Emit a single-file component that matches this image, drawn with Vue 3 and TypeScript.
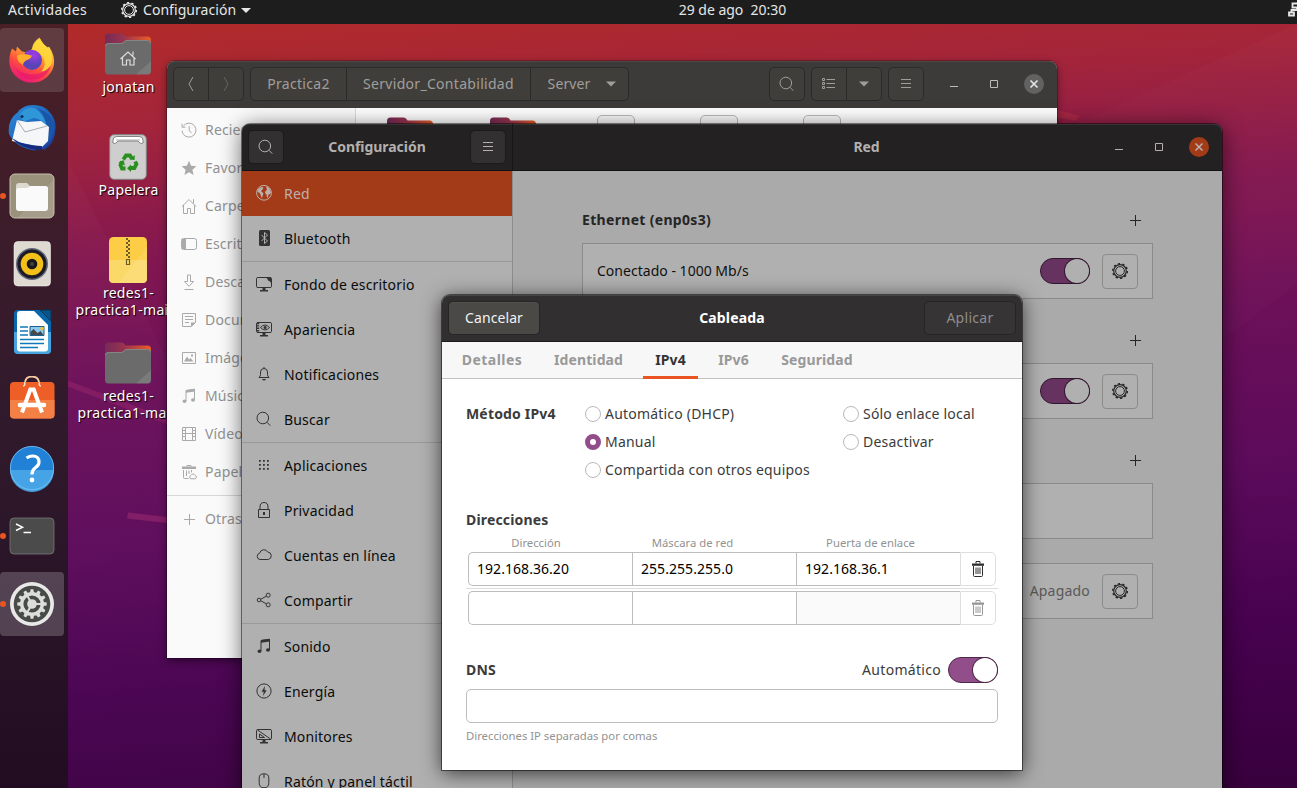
<script setup lang="ts">
import { ref } from 'vue'

interface Glyph { s?: string; f?: string }

const glyphs: Record<string, Glyph> = {
  recent: { s: 'M2.2 4.2A7 7 0 1 1 1 8.6M1 1.6v3.6h3.4M8.2 4.2v4.6l2.4 2' },
  star: { f: 'M8 .8l2.1 4.9 5.3.5-4 3.5 1.2 5.2L8 12.2l-4.600 2.700 1.200-5.200-4-3.500 5.300-.5z' },
  home: { s: 'M.8 8.700L8 1.500l7.200 7.200M2.500 7v8.500h4v-5h3v5h4V7M12.500 1.200v4.400' },
  desktop: { s: 'M2.500 2.500h11a2 2 0 0 1 2 2v7a2 2 0 0 1-2 2h-11a2 2 0 0 1-2-2v-7a2 2 0 0 1 2-2zM4.500 2.500v11', f: 'M1 3h3v10H1z' },
  download: { s: 'M6.500 1v6.500h-3L8 12.300l4.500-4.800h-3V1zM3.500 15.500h9' },
  document: { s: 'M1.500 1.500h13v9l-4 4h-9zM4 4.500h8M4 7.500h8M4 10.500h4', f: 'M10 14.500v-4h4.500z' },
  image: { s: 'M1.500 2.500h13v11h-13z', f: 'M3 11.500l3-5 2 3 1.500-1.500 3 3.500zM10 4.500h2v2h-2z' },
  music: { s: 'M5 13V2.500l8.500-1.200V12', f: 'M5 2l9-1.200v2.800L5 4.800zM1.500 13.200a2 1.800 0 1 0 4 0 2 1.800 0 1 0-4 0zM10 12a2 1.800 0 1 0 4 0 2 1.800 0 1 0-4 0z' },
  video: { s: 'M1.500 1.500h13v13h-13zM4.500 1.500v13M11.500 1.500v13M4.500 7.500h7M1.500 4.500h3M1.500 7.500h3M1.500 10.500h3M11.500 4.500h3M11.500 7.500h3M11.500 10.500h3' },
  trashfull: { s: 'M2.500 6v7.500q0 1 1 1h4M6 2.500v-1h4v1M5.500 6.500V12M8 6.500V10M10.500 6v2.500M9.500 14.800a2 2 0 0 1 .5-3.500 2.200 2.200 0 0 1 4 0 2 2 0 0 1 .5 3.500z', f: 'M1 2.500h14v2.500H1z' },
  plus: { s: 'M8.500 3v11M3 8.500h11' },
  search: { s: 'M1 7a5.800 5.800 0 1 0 11.600 0A5.800 5.800 0 1 0 1 7M11 11.300l3.300 3.400' },
  menu: { s: 'M3 3.500h10M3 7.500h10M3 11.500h10' },
  list: { s: 'M5.500 3.500H14M5.500 7.500H14M5.500 11.500H14M1.500 2.500H3.500v2H1.500zM1.500 6.500H3.500v2H1.500zM1.500 10.500H3.500v2H1.500z' },
  down: { f: 'M3 5.500h10L8 10.500z' },
  left: { s: 'M10 1L6 8l4 7' },
  right: { s: 'M6 1l4 7-4 7' },
  globe: { s: 'M.6 7.800a7.400 7.400 0 1 0 14.800 0A7.400 7.400 0 1 0 .6 7.800', f: 'M2 4.500l3-2.500 2.500.5-1 2L5 6l2.500 2.500L6.500 11 6 13.500 5 11 3.800 8 1.500 7zM10 1.500l3 1.300 2 4.700-1 1.500-1.500.5L12 12l-1 1L10.500 9.500 9 8l.5-2 1.500-1z' },
  bluetooth: {},
  wallpaper: { s: 'M2 1.500h12q1.500 0 1.500 1v8q0 1-1.500 1H2q-1.500 0-1.500-1v-8q0-1 1.500-1z', f: 'M9.500 1.500H15V7q-1-2.500-3-2.500Q12 2.500 9.500 1.500zM6.500 11.500h3V14H12v1.500H4V14h2.500z' },
  appearance: { s: 'M2 1.500h12q1.500 0 1.500 1v8q0 1-1.500 1H2q-1.500 0-1.500-1v-8q0-1 1.500-1zM4.500 6.500q4.500-5 9 0-4.500 5-9 0z', f: 'M7.500 6.500a1.600 1.600 0 1 0 3.200 0 1.600 1.600 0 1 0-3.200 0zM1 2h2.200v1.300H1zM1 4.300h2.200v1.300H1zM1 6.600h2.200v1.300H1zM1 8.900h2.200v1.600H1zM6.500 11.500h3V14H12v1.500H4V14h2.500z' },
  bell: { s: 'M3 11.500h10q-1.500-1.500-1.500-3V6q0-3.300-3.500-3.500Q4.500 2.700 4.500 6v2.500q0 1.500-1.500 3zM8 1v1.500', f: 'M6 13h4q-.5 1.500-2 1.500T6 13z' },
  apps: { f: 'M3 3h1.800v1.800H3zM7 3h1.800v1.800H7zM11 3h1.800v1.800H11zM3 7h1.800v1.800H3zM7 7h1.800v1.800H7zM11 7h1.800v1.800H11zM3 11h1.800v1.800H3zM7 11h1.800v1.800H7zM11 11h1.800v1.800H11z' },
  lock: { s: 'M2.500 7.500h11v8h-11zM4 7.500V5q0-4.500 4-4.500T12 5v2.500', f: 'M7 10h2v3H7z' },
  cloud: { s: 'M4 12.500a3.200 3.200 0 0 1-.3-6.300 4.300 4.300 0 0 1 8-1.200 3.800 3.800 0 0 1 .6 7.500z' },
  share: { s: 'M1.200 8a1.800 1.800 0 1 0 3.600 0 1.800 1.800 0 1 0-3.600 0M10.200 3.200a2 2 0 1 0 4 0 2 2 0 1 0-4 0M10.200 12.800a2 2 0 1 0 4 0 2 2 0 1 0-4 0M4.800 7.200l5.500-3M4.800 8.800l5.500 3' },
  energy: { s: 'M.9 8a7.100 7.100 0 1 0 14.200 0A7.100 7.100 0 1 0 .9 8', f: 'M9 3L5.500 8.800h2.200L7 13l3.700-5.800H8.500z' },
  monitor: { s: 'M2 1.500h12q1.500 0 1.500 1v8q0 1-1.500 1H2q-1.500 0-1.500-1v-8q0-1 1.500-1zM1.500 2l13 9M3.500 6V9.500h5z', f: 'M6.500 11.500h3V14H12v1.500H4V14h2.500z' },
  mouse: { s: 'M8 .8q4.800 0 4.800 4v5q0 5-4.800 5t-4.800-5v-5q0-4 4.800-4zM8 1v4' },
  trash: { s: 'M3.500 5v9.500q0 1 1 1h7q1 0 1-1V5M6 2.500v-2h4v2M6 6.500V13M8 6.500V13M10 6.500V13', f: 'M2 2.500h12v2.300H2z' },
}

const dock = [
  { id: 'firefox', on: true, dot: false }, { id: 'thunderbird', on: false, dot: false },
  { id: 'files', on: false, dot: true }, { id: 'rhythmbox', on: false, dot: false },
  { id: 'writer', on: false, dot: false }, { id: 'software', on: false, dot: false },
  { id: 'help', on: false, dot: false }, { id: 'terminal', on: false, dot: true },
  { id: 'settings', on: true, dot: true },
]

const places = [
  ['recent', 'Recientes'], ['star', 'Favoritos'], ['home', 'Carpeta personal'], ['desktop', 'Escritorio'],
  ['download', 'Descargas'], ['document', 'Documentos'], ['image', 'Imágenes'], ['music', 'Música'],
  ['video', 'Vídeos'], ['trashfull', 'Papelera'],
]

const panels = [
  [['globe', 'Red'], ['bluetooth', 'Bluetooth']],
  [['wallpaper', 'Fondo de escritorio'], ['appearance', 'Apariencia'], ['bell', 'Notificaciones'], ['search', 'Buscar']],
  [['apps', 'Aplicaciones'], ['lock', 'Privacidad'], ['cloud', 'Cuentas en línea'], ['share', 'Compartir']],
  [['music', 'Sonido'], ['energy', 'Energía'], ['monitor', 'Monitores'], ['mouse', 'Ratón y panel táctil']],
]

const tabs = ['Detalles', 'Identidad', 'IPv4', 'IPv6', 'Seguridad']
const tab = ref('IPv4')
const methods = ['Automático (DHCP)', 'Sólo enlace local', 'Manual', 'Desactivar', 'Compartida con otros equipos']
const method = ref('Manual')
const rows = [['192.168.36.20', '255.255.255.0', '192.168.36.1'], ['', '', '']]
const teeth = Array.from({ length: 12 }, (_, i) => i * 30)
</script>

<template>
  <div class="screen">
    <svg class="wallpaper" width="1297" height="788" viewBox="0 0 1297 788">
      <path d="M68 160L380 788H68z" fill="#fff" opacity=".018" />
      <path d="M45 372l122 46v6L45 378z" fill="#d04080" opacity=".22" />
      <path d="M128 512.500l60 7v6l-61-7z" fill="#d04080" opacity=".3" />
      <path d="M1050 108l30 8-4 5-26-5z" fill="#d33a48" opacity=".3" />
      <path d="M1075 124L1297 24v260L1222 340z" fill="#fff" opacity=".015" />
    </svg>

    <header class="topbar">
      <span class="act">Actividades</span>
      <span class="appmenu">
        <svg class="gear" viewBox="0 0 16 16"><use href="#cog" /></svg>
        <span>Configuración</span>
        <svg class="tri" viewBox="0 0 10 5"><path d="M0 0h10L5 5z" fill="currentColor" /></svg>
      </span>
      <span class="clock">29 de ago&nbsp; 20:30</span>
      <svg class="net" viewBox="0 0 9 16"><path d="M4.500 1.500h6v4h-6zM1 10.500h5v3H1zM3.500 10V8H9V5" fill="none" stroke="currentColor" stroke-width="1.800" /></svg>
    </header>

    <svg class="defs" width="0" height="0">
      <defs>
        <g id="cog" fill="none" stroke="currentColor">
          <circle cx="8" cy="8" r="4.400" stroke-width="1" />
          <circle cx="8" cy="8" r="6.300" stroke-width="1.200" />
          <circle cx="8" cy="8" r="7.300" stroke-width="1.500" stroke-dasharray="2.200 2.387" />
        </g>
        <linearGradient id="fold" x1="0" x2="1"><stop offset="0" stop-color="#752a57" /><stop offset=".4" stop-color="#983450" /><stop offset="1" stop-color="#ee5c25" /></linearGradient>
        <linearGradient id="ff" x1=".8" y1="0" x2=".3" y2="1"><stop offset="0" stop-color="#fff44f" /><stop offset=".35" stop-color="#ffa930" /><stop offset=".65" stop-color="#ff4f3f" /><stop offset="1" stop-color="#e6157a" /></linearGradient>
        <radialGradient id="ffp" cx=".6" cy=".25"><stop offset="0" stop-color="#a43be8" /><stop offset="1" stop-color="#5a45b8" /></radialGradient>
        <linearGradient id="tb" x1="0" y1="0" x2="1" y2="1"><stop offset="0" stop-color="#2f8fdc" /><stop offset=".6" stop-color="#1a5fb8" /><stop offset="1" stop-color="#20308c" /></linearGradient>
        <symbol id="folder" viewBox="0 0 46 42">
          <path d="M0 10V4q0-3.500 3.500-3.500h13q2 0 3 1.500l1 1.500h22q3.500 0 3.500 3.500v10H0z" fill="url(#fold)" />
          <path d="M0 13q0-3 3.500-3H17l4-3h21.500q3.500 0 3.500 3.500V38q0 3.500-3.500 3.500h-39Q0 41.500 0 38z" fill="#6b6b6b" />
          <path d="M46 28v10q0 3.500-3.500 3.500H31z" fill="#fff" opacity=".1" />
          <path d="M.5 13q0-2.500 3-2.500H17l4-3h21.500q3 0 3 3" fill="none" stroke="#8b8b8b" stroke-width=".8" />
        </symbol>
      </defs>
    </svg>

    <aside class="dock">
      <div v-for="d in dock" :key="d.id" class="dockitem" :class="{ on: d.on }">
        <i v-if="d.dot" class="dot"></i>
        <svg viewBox="0 0 48 48" width="48" height="48">
          <g v-if="d.id === 'firefox'" transform="translate(0 -2.500)">
            <path d="M4 15l4 3 1-5 5 5 5 1q6-3 7-8 2-4 6-6 3 6 8 9l1-1q6 9 5 18a22.500 21.500 0 0 1-44 2Q0 24 4 15z" fill="url(#ff)" />
            <path d="M24 16q0-7 7.500-12 2 6 8 11 6 6 4 15-2 7-10 8 6-8 1-15-4-6-10.500-7z" fill="#ffd93a" opacity=".85" />
            <path d="M3 24q2 15 20 17 13 0 20-9-4 14-19 14T3 24z" fill="#e8166f" opacity=".65" />
            <circle cx="24" cy="26.500" r="10" fill="url(#ffp)" />
            <path d="M9 22q6-3 15 0-1 3-5 4.500-4 2-4 5Q9 29 9 22z" fill="#ffae2b" />
            <path d="M17 19q6-4 11-1-4 1-5 4z" fill="#8a3be0" />
          </g>
          <g v-else-if="d.id === 'thunderbird'">
            <path d="M20 1.500q14-2 21 6 7 7 6.500 17Q47 40 36 46l-5-3-4 3.500Q8 44 1 30 -1 16 10 8q2-4 10-6.500z" fill="url(#tb)" />
            <path d="M29 4q10 8 10 21 0 11-6 19 10-4 13-17Q48 11 29 4z" fill="#1a55a8" />
            <path d="M12 10q7-9 16-5 8 5 11 18-5-8-13-9l-9 3q-5-1-5-7z" fill="#2f97d8" />
            <path d="M9 16l10 2 14-1 8 6-1 14-6 6L4 37z" fill="#f5f6f8" />
            <path d="M9 16l8 12 22-6" fill="none" stroke="#a9adb5" stroke-width="1" />
            <path d="M4 34q11 8 30 8l-1 4q-20-1-29-12z" fill="#172b7e" />
            <circle cx="14" cy="12.500" r="1.500" fill="#14295f" />
          </g>
          <g v-else-if="d.id === 'files'">
            <rect x="2" y="2" width="44" height="44" rx="5" fill="#9b927c" stroke="#c7c0ae" />
            <path d="M45.500 8v33a4.500 4.500 0 0 1-4.500 4.500H10z" fill="#fff" opacity=".1" />
            <path d="M8 14q0-3 3-3h8l3 3h15q3 0 3 3v10H8z" fill="#dcd9d0" />
            <path d="M8 19q0-3 3-3h8l4-2h14q3 0 3 3v19q0 3-3 3H11q-3 0-3-3z" fill="#fafafa" />
          </g>
          <g v-else-if="d.id === 'rhythmbox'">
            <rect x="6" y="1.500" width="36.500" height="44.500" rx="4" fill="#dedad2" stroke="#fff" stroke-opacity=".5" />
            <circle cx="24" cy="24" r="16" fill="#626679" /><circle cx="24" cy="24" r="14.500" fill="#1b1a25" />
            <circle cx="24" cy="24" r="11.300" fill="#f3bf1b" /><circle cx="24" cy="24" r="5.300" fill="#191919" /><circle cx="24" cy="24" r="2" fill="#444" />
          </g>
          <g v-else-if="d.id === 'writer'">
            <path d="M10 2h31q2 0 2 2v38q0 4-4 4H10q-4 0-4-4V6q0-4 4-4z" fill="#0968ac" />
            <path d="M6 24h37v18q0 4-4 4H10q-4 0-4-4z" fill="#48a4dc" />
            <path d="M32 2h11v11z" fill="#07558f" stroke="#133047" />
            <path d="M12 3h14l14 14v23.500q0 3-3 3H12q-3 0-3-3V6q0-3 3-3z" fill="#fff" />
            <path d="M12 19h8M12 23h8M12 27h8M12 31.500h24M12 35.500h24M12 39.500h18" stroke="#1179b8" stroke-width="1.700" />
            <path d="M22 18.500h14v9H22z" fill="#8dc8ef" stroke="#18618f" /><path d="M22.500 27v-3l3-3 4 4 3-2 3 4z" fill="#45484c" /><circle cx="34" cy="20.500" r="1.700" fill="#f4c22c" />
          </g>
          <g v-else-if="d.id === 'software'" transform="translate(0 -2)">
            <path d="M17 9.500q0-7 7-7t7 7" fill="none" stroke="#f7c9a0" stroke-width="1.800" />
            <rect x="2" y="8" width="44.500" height="36.500" rx="4" fill="#ee5f27" />
            <path d="M2 26h44.500v14.500q0 4-4 4H6q-4 0-4-4z" fill="#f38146" />
            <path d="M14 38.500L22.300 15.500h3.400L34 38.500" fill="none" stroke="#fff" stroke-width="4" />
            <path d="M12 31h24" stroke="#fff" stroke-width="4.500" stroke-linecap="round" />
            <path d="M16.500 8q1 4-1.500 4M31.500 8q-1 4 1.500 4" stroke="#f7e2cc" fill="none" stroke-width="1.500" />
          </g>
          <g v-else-if="d.id === 'help'">
            <circle cx="24" cy="24" r="22" fill="#2081d6" /><path d="M2 26a22 22 0 0 0 44 0z" fill="#46a4e6" />
            <circle cx="24" cy="24" r="21.600" fill="none" stroke="#7bc2f0" stroke-width=".8" />
            <path d="M18.500 14q3-2 6-2 6.500 0 6.500 6 0 3.500-4 6-3 2-3 6.500" fill="none" stroke="#fff" stroke-width="3.200" /><circle cx="24" cy="36" r="2.400" fill="#fff" />
          </g>
          <g v-else-if="d.id === 'terminal'">
            <rect x="2" y="6" width="44" height="36" rx="4" fill="#4b4b4b" stroke="#777" stroke-width=".8" />
            <path d="M8 12l6.500 3.200L8 18.500M15.500 20.500H23" fill="none" stroke="#fff" stroke-width="1.500" />
          </g>
          <g v-else>
            <circle cx="24" cy="24" r="22" fill="#e8e8e6" /><circle cx="24" cy="24" r="18.300" fill="#484a49" />
            <circle cx="24" cy="24" r="10.300" fill="none" stroke="#dddddb" stroke-width="3.400" />
            <path v-for="a in teeth" :key="a" d="M22.600 9.300h2.800l.6 3.500h-4z" fill="#dddddb" :transform="`rotate(${a} 24 24)`" />
            <circle cx="24" cy="24" r="4.800" fill="#dddddb" />
            <path d="M24 24h10M24 24l-5-8.700M24 24l-5 8.700" stroke="#dddddb" stroke-width="2" />
          </g>
        </svg>
      </div>
    </aside>

    <div class="shortcut jon">
      <svg width="46" height="42"><use href="#folder" /><path d="M15.500 26l7.500-7 7.500 7M17.500 24.500v7.500h4v-5H25v5h4v-7.500M28 18.500v4" fill="none" stroke="#ddd" stroke-width="1.200" /></svg>
      <span>jonatan</span>
    </div>
    <div class="shortcut bin">
      <svg width="38" height="46" viewBox="0 0 38 46">
        <rect x=".7" y=".7" width="36.600" height="44.600" rx="4.500" fill="#cecece" stroke="#858585" />
        <path d="M4 9V6q0-3.500 4-3.500h22q4 0 4 3.500v3q-1 1-3 0L29 7H9L7 9q-2 1-3 0z" fill="#fff" stroke="#777" stroke-width=".9" />
        <path d="M7 6h24" stroke="#999" stroke-width=".8" />
        <g fill="none" stroke="#299020" stroke-width="3.800">
          <path d="M14.300 25.500l2.700-4h4l2 3.200M26.200 27.500l1.200 2.500-2 4h-4M16.500 34.500h-3.500l-1.500-3.500 1.500-3.500" />
        </g>
        <path d="M20.500 25.500l5 .5.500-5zM22 30.500v7.500L18 34.300zM9.500 28.500l5-2.500 1.500 5.500z" fill="#299020" />
      </svg>
      <span>Papelera</span>
    </div>
    <div class="shortcut zip">
      <svg width="38" height="46" viewBox="0 0 38 46">
        <rect width="38" height="46" rx="4.500" fill="#fdce45" /><path d="M0 23h38v18.500q0 4.500-4.500 4.500h-29Q0 46 0 41.500z" fill="#fbd968" />
        <path d="M38 10v31.500q0 4.500-4.500 4.500H10z" fill="#fff" opacity=".1" />
        <path d="M18 1v20" stroke="#6d5d28" stroke-width="2" stroke-dasharray="2 2" /><path d="M20 3v18" stroke="#6d5d28" stroke-width="2" stroke-dasharray="2 2" /><path d="M17.500 22.500h3v5h-3z" fill="none" stroke="#6d5d28" stroke-width="1.200" />
      </svg>
      <span>redes1-<br>practica1-main.</span>
    </div>
    <div class="shortcut fol">
      <svg width="46" height="42"><use href="#folder" /></svg>
      <span>redes1-<br><em>practica1-main</em></span>
    </div>

    <section class="win files">
      <div class="fhead">
        <div class="seg"><b v-for="g in ['left', 'right']" :key="g" class="w35" :class="g"><svg class="ic" viewBox="0 0 16 16"><path :d="glyphs[g].s" class="st" /></svg></b></div>
        <div class="seg path">
          <b class="p1">Practica2</b><b class="p2">Servidor_Contabilidad</b><b class="p3">Server <svg class="ic" viewBox="0 0 16 16"><path :d="glyphs.down.f" class="fl" /></svg></b>
        </div>
        <div class="seg push"><b class="w34"><svg class="ic" viewBox="0 0 16 16"><path :d="glyphs.search.s" class="st" /></svg></b></div>
        <div class="seg"><b class="w35"><svg class="ic" viewBox="0 0 16 16"><path :d="glyphs.list.s" class="st" /></svg></b><b class="w35"><svg class="ic" viewBox="0 0 16 16"><path :d="glyphs.down.f" class="fl" /></svg></b></div>
        <div class="seg"><b class="w34"><svg class="ic" viewBox="0 0 16 16"><path :d="glyphs.menu.s" class="st" /></svg></b></div>
        <div class="controls">
          <svg width="20" height="20"><path d="M6 12.500h8" class="st" /></svg>
          <svg width="20" height="20"><path d="M6.500 6.500h7v7h-7z" class="st" /></svg>
          <svg width="20" height="20"><circle cx="10" cy="10" r="10" fill="#626262" /><path d="M6.500 6.500l7 7m0-7l-7 7" stroke="#e4e4e4" stroke-width="1.700" /></svg>
        </div>
      </div>
      <div class="fbody">
        <nav class="places">
          <div v-for="p in places" :key="p[1]" class="place">
            <svg class="ic" viewBox="0 0 16 16"><path v-if="glyphs[p[0]].s" :d="glyphs[p[0]].s" class="st" /><path v-if="glyphs[p[0]].f" :d="glyphs[p[0]].f" class="fl" /></svg>{{ p[1] }}
          </div>
          <div class="place other"><svg class="ic" viewBox="0 0 16 16"><path :d="glyphs.plus.s" class="st" /></svg>Otras ubicaciones</div>
        </nav>
        <div class="items">
          <svg v-for="n in 2" :key="n" width="46" height="42"><use href="#folder" /></svg>
          <i v-for="n in 3" :key="'d' + n" class="sheet"></i>
        </div>
      </div>
    </section>

    <section class="win settings">
      <div class="shead">
        <div class="sleft">
          <b class="sq"><svg class="ic" viewBox="0 0 16 16"><path :d="glyphs.search.s" class="st" /></svg></b>
          <strong>Configuración</strong>
          <b class="sq"><svg class="ic" viewBox="0 0 16 16"><path :d="glyphs.menu.s" class="st" /></svg></b>
        </div>
        <div class="sright">
          <strong>Red</strong>
          <div class="controls">
            <svg width="20" height="20"><path d="M6 12.500h8" class="st" /></svg>
            <svg width="20" height="20"><path d="M6.500 6.500h7v7h-7z" class="st" /></svg>
            <svg width="20" height="20"><circle cx="10" cy="10" r="10" fill="#a33b18" /><path d="M6.500 6.500l7 7m0-7l-7 7" stroke="#b9b2b0" stroke-width="1.500" /></svg>
          </div>
        </div>
      </div>
      <div class="sbody">
        <nav class="panels">
          <div v-for="(g, i) in panels" :key="i" class="pgroup">
            <div v-for="p in g" :key="p[1]" class="panel" :class="{ sel: p[1] === 'Red' }">
              <svg v-if="p[0] === 'bluetooth'" class="ic" viewBox="0 0 16 16"><rect x="3" width="11" height="16" rx="1.500" class="fl" /><path d="M5.500 5l6 6-3 2.500v-11l3 2.500-6 6" fill="none" stroke="#b0b0b0" /></svg>
              <svg v-else class="ic" viewBox="0 0 16 16"><path v-if="glyphs[p[0]].s" :d="glyphs[p[0]].s" class="st" /><path v-if="glyphs[p[0]].f" :d="glyphs[p[0]].f" class="fl" /></svg>
              <span>{{ p[1] }}</span>
            </div>
          </div>
        </nav>
        <main class="network">
          <div v-for="n in 3" :key="n" class="device">
            <div class="dhead"><strong>{{ n === 1 ? 'Ethernet (enp0s3)' : '' }}</strong><svg class="ic" viewBox="0 0 16 16"><path :d="glyphs.plus.s" class="st" /></svg></div>
            <div class="dbox">
              <span>{{ n === 1 ? 'Conectado - 1000 Mb/s' : '' }}</span>
              <template v-if="n < 3">
                <i class="switch dim"></i>
                <b class="gbtn"><svg class="ic" viewBox="0 0 16 16"><use href="#cog" /></svg></b>
              </template>
            </div>
          </div>
          <div class="dbox last"><span class="off">Apagado</span><b class="gbtn"><svg class="ic" viewBox="0 0 16 16"><use href="#cog" /></svg></b></div>
        </main>
      </div>
    </section>

    <section class="win dialog">
      <div class="head">
        <button class="cancel">Cancelar</button><strong>Cableada</strong><button class="apply" disabled>Aplicar</button>
      </div>
      <div class="tabs"><span v-for="t in tabs" :key="t" :class="[t.toLowerCase(), { cur: t === tab }]" @click="tab = t">{{ t }}</span></div>
      <div class="form">
        <div class="method">
          <strong>Método IPv4</strong>
          <div class="opts"><label v-for="m in methods" :key="m" @click="method = m"><i class="radio" :class="{ chk: m === method }"></i>{{ m }}</label></div>
        </div>
        <strong class="dirs">Direcciones</strong>
        <div class="cols"><span>Dirección</span><span>Máscara de red</span><span>Puerta de enlace</span></div>
        <div v-for="(r, i) in rows" :key="i" class="row">
          <span v-for="(c, j) in r" :key="j" class="cell" :class="{ dis: i === 1 && j === 2 }">{{ c }}</span>
          <span class="del" :class="{ dim: i === 1 }"><svg class="ic" viewBox="0 0 16 16"><path :d="glyphs.trash.s" class="st" /><path :d="glyphs.trash.f" class="fl" /></svg></span>
        </div>
        <div class="dns"><strong>DNS</strong><span>Automático</span><i class="switch"></i></div>
        <div class="entry"></div>
        <div class="hint">Direcciones IP separadas por comas</div>
      </div>
    </section>
  </div>
</template>

<style>
html, body { margin: 0; overflow: hidden; }
</style>

<style scoped>
* { box-sizing: border-box; }
.screen { position: relative; width: 1297px; height: 788px; overflow: hidden; font: 14px/20px "Noto Sans", "Open Sans", sans-serif; letter-spacing: .17px; white-space: nowrap; background: linear-gradient(176deg, #b22b29 3%, #a4253a 15%, #85184f 29%, #6d1059 44%, #5c0b5b 63%, #480250 80%, #38003d 100%); }
b { font-weight: 400; }
i { display: block; }
strong { font-weight: 700; }
svg { display: block; flex: none; }
.wallpaper { position: absolute; inset: 0; }
.defs { position: absolute; }
.ic { width: 16px; height: 16px; overflow: visible; }
.st { fill: none; stroke: currentColor; stroke-width: 1; }
.fl { fill: currentColor; }

.topbar { position: relative; height: 24px; background: #1d1d1d; color: #e6e6e6; display: flex; align-items: center; padding: 0 0 4px 8px; line-height: 20px; }
.act { width: 113px; letter-spacing: .4px; }
.appmenu { display: flex; align-items: center; gap: 7px; letter-spacing: .05px; }
.gear { width: 16px; height: 16px; margin-right: -1px; }
.tri { width: 10px; height: 5px; margin-left: -2px; }
.clock { position: absolute; left: 0; right: 0; top: 0; margin-right: -168px; text-align: center; letter-spacing: -.02px; }
.net { width: 9px; height: 16px; margin-left: auto; }

.dock { position: absolute; top: 24px; left: 0; width: 68px; bottom: 0; padding: 4px 0; background: linear-gradient(#4a1f25, #3b1c2b 30%, #311a2c 50%, #291427 75%, #210c22); display: flex; flex-direction: column; gap: 4px; }
.dockitem { position: relative; width: 64px; height: 64px; display: flex; align-items: center; justify-content: center; border-radius: 4px; }
.dockitem.on { background: rgba(255, 255, 255, .13); }
.dockitem.on:last-child { background: rgba(255, 255, 255, .2); }
.dot { position: absolute; left: 0; top: 29px; width: 6px; height: 6px; border-radius: 50%; background: #e95420; }

.shortcut { position: absolute; width: 120px; left: 68px; display: flex; flex-direction: column; align-items: center; color: #fff; text-align: center; line-height: 17px; letter-spacing: .3px; text-shadow: 1px 1px 1px #000; }
.shortcut span { margin-top: 3px; padding-left: 1px; }
.shortcut em { font-style: normal; }
.jon { top: 33px; } .bin { top: 134px; } .zip { top: 237px; } .fol { top: 342px; }
.bin span, .zip span { margin-top: 1px; }

.win { position: absolute; border-radius: 8px 8px 0 0; }
.files { left: 167px; top: 61px; width: 890px; height: 597px; background: #fafafa; box-shadow: 0 0 0 1px rgba(0, 0, 0, .25), 0 3px 9px rgba(0, 0, 0, .45); color: #929292; }
.fhead { height: 47px; border-radius: 8px 8px 0 0; background: #3d3b39; box-shadow: inset 0 1px #4b4947; color: #a09e9b; display: flex; align-items: center; padding: 0 13px 1px 6px; }
.seg { display: flex; height: 34px; border: 1px solid #2b2a28; border-radius: 5px; background: #403e3b; margin-right: 6px; }
.seg b { display: flex; align-items: center; justify-content: center; }
.seg b + b { border-left: 1px solid #2b2a28; }
.w35 { width: 34px; } .w34 { width: 34px; }
.seg b + b.w35 { width: 35px; }
.right { color: #686663; }
.path { letter-spacing: .3px; }
.p1 { width: 95px; } .p2 { width: 184px; } .p3 { width: 98px; gap: 13px; padding-left: 8px; letter-spacing: .1px; }
.push { margin-left: auto; }
.controls { display: flex; gap: 20px; margin-left: 14px; }
.files .controls { color: #bdbcba; }
.fbody { display: flex; height: 550px; }
.places { width: 189px; border-right: 1px solid #dadada; padding-top: 3px; background: #fafafa; }
.place { height: 38px; display: flex; align-items: center; gap: 8px; padding-left: 14px; }
.place .ic { color: #aaa; }
.other { border-top: 1px solid #d7d7d7; height: 46px; margin-top: 4px; }
.items { display: flex; gap: 57px; padding: 9px 0 0 31px; background: #fff; flex: 1; }
.sheet { width: 38px; height: 46px; margin: -2px 4px; border: 1px solid #b9b9b9; border-radius: 5px; background: #fafafa; }

.settings { left: 242px; top: 124px; width: 980px; height: 680px; background: #aaa; box-shadow: 0 0 0 1px rgba(0, 0, 0, .45), 0 3px 22px rgba(0, 0, 0, .6); }
.shead { height: 47px; border-radius: 8px 8px 0 0; background: #232122; border-bottom: 1px solid #131212; box-shadow: inset 0 1px #343334; display: flex; color: #b3b0ae; letter-spacing: -.05px; }
.sleft { width: 271px; border-right: 1px solid #171616; display: flex; align-items: center; justify-content: space-between; padding: 0 7px; }
.sq { width: 34px; height: 32px; background: #323031; border-radius: 4px; display: flex; align-items: center; justify-content: center; box-shadow: 0 0 0 1px #1c1a1b; }
.sright { flex: 1; display: flex; align-items: center; justify-content: flex-end; padding-right: 13px; position: relative; }
.sright strong { position: absolute; left: 0; right: 2px; text-align: center; }
.sbody { display: flex; height: 633px; }
.panels { width: 271px; background: #b0b0b0; border-right: 1px solid #8c8c8c; }
.pgroup + .pgroup { border-top: 1px solid #999; }
.panel { height: 45px; display: flex; align-items: center; padding-left: 14px; gap: 12px; color: #0b0b0b; }
.panel .ic { color: #333; position: relative; top: -.5px; }
.sel { background: #a33b18; color: #bdb0ab; }
.panel.sel .ic { color: #bdb0ab; }
.network { flex: 1; padding: 26px 69px 0; color: #111; }
.device { margin-bottom: 18px; }
.dhead { height: 46px; display: flex; align-items: center; justify-content: space-between; padding-right: 10px; color: #252525; letter-spacing: .32px; }
.dbox { height: 56px; border: 1px solid #8a8a8a; background: #b0b0b0; display: flex; align-items: center; padding: 0 14px; gap: 12px; letter-spacing: .02px; }
.dbox span { margin-right: auto; }
.last { margin-top: 24px; }
.last .off { margin: 0 0 0 auto; color: #595959; letter-spacing: .2px; }
.gbtn { width: 36px; height: 35px; border: 1px solid #8b8b8b; border-radius: 4px; display: flex; align-items: center; justify-content: center; background: #b0b0b0; color: #282828; }
.switch { width: 50px; height: 26px; border-radius: 13px; border: 1px solid #4d2849; background: #924d8b; display: flex; justify-content: flex-end; }
.switch::after { content: ""; width: 24px; height: 24px; border-radius: 50%; background: #fff; box-shadow: 0 0 0 1px #4d2849; }
.switch.dim { background: #663361; border-color: #33162f; }
.switch.dim::after { background: #b0b0b0; box-shadow: 0 0 0 1px #33162f; }

.dialog { left: 442px; top: 295px; width: 580px; height: 475px; background: #fff; color: #3b3b3b; box-shadow: 0 0 0 1px rgba(0, 0, 0, .5), 0 3px 20px rgba(0, 0, 0, .7); }
.head { height: 47px; border-radius: 8px 8px 0 0; background: #312f30; border-bottom: 1px solid #1c1b1b; box-shadow: inset 0 1px #464445; color: #fff; display: flex; align-items: center; justify-content: space-between; padding: 0 6px; position: relative; }
.head strong { position: absolute; left: 0; right: 0; text-align: center; pointer-events: none; }
button { font: inherit; letter-spacing: .1px; height: 34px; border: 1px solid #262424; border-radius: 5px; padding: 0; }
.cancel { width: 92px; background: #4a4946; color: #f2f2f2; box-shadow: inset 0 1px #555350; }
.apply { width: 92px; background: #363435; color: #8f8d8d; letter-spacing: .3px; }
.tabs { height: 37px; background: #f7f7f7; border-bottom: 1px solid #c2c2c2; display: flex; padding-left: 8px; font-weight: 700; color: #999; letter-spacing: .12px; }
.tabs span { height: 37px; line-height: 36px; text-align: center; }
.tabs .detalles { width: 84px; letter-spacing: .45px; } .tabs .identidad { width: 93px; margin-left: 8px; }
.tabs .ipv4 { width: 55px; margin: 0 12px 0 8px; } .tabs .ipv6 { width: 47px; } .tabs .seguridad { width: 96px; margin-left: 12px; }
.tabs .cur { color: #333; border-bottom: 3px solid #e95420; }
.form { padding: 21px 24px 0; }
.method { display: flex; height: 84px; line-height: 28px; }
.method strong { width: 119px; }
.opts { display: grid; grid-template-columns: 258px 1fr; grid-auto-rows: 28px; letter-spacing: .2px; }
label { display: flex; align-items: center; gap: 4px; width: 0; }
.radio { flex: none; width: 16px; height: 16px; border-radius: 50%; border: 1px solid #b9b9b9; background: #fff; }
.chk { border: 5px solid #924d8b; }
.dirs { display: block; margin-top: 26px; }
.cols { display: flex; font-size: 11.300px; line-height: 18px; height: 18px; color: #929292; margin: 4px 0 0; letter-spacing: 0; }
.cols span { text-align: center; }
.cols span:first-child { width: 140px; } .cols span:nth-child(2) { width: 173px; } .cols span:nth-child(3) { width: 183px; }
.row { display: flex; margin: 0 2px; height: 34px; position: relative; }
.row + .row { margin-top: 5px; }
.row + .row::before { content: ""; position: absolute; left: -2px; right: -2px; top: -3px; border-top: 1px solid #dedede; }
.cell { width: 164px; border: 1px solid #bdbdbd; border-right: 0; padding: 0 8px; line-height: 32px; color: #000; letter-spacing: .05px; }
.cell:first-child { border-radius: 5px 0 0 5px; }
.dis { background: #fafafa; }
.del { width: 36px; border: 1px solid #dedede; border-radius: 0 5px 5px 0; display: flex; align-items: center; justify-content: center; color: #2e2e2e; }
.del.dim { color: #969696; }
.del .ic { margin-right: 1px; }
.dns { display: flex; align-items: center; margin-top: 32px; height: 26px; }
.dns span { margin: 0 7px 0 auto; letter-spacing: .3px; }
.entry { margin-top: 6px; height: 34px; border: 1px solid #bdbdbd; border-radius: 5px; }
.hint { font-size: 11.300px; line-height: 18px; margin-top: 4px; color: #929292; letter-spacing: 0; }
</style>
